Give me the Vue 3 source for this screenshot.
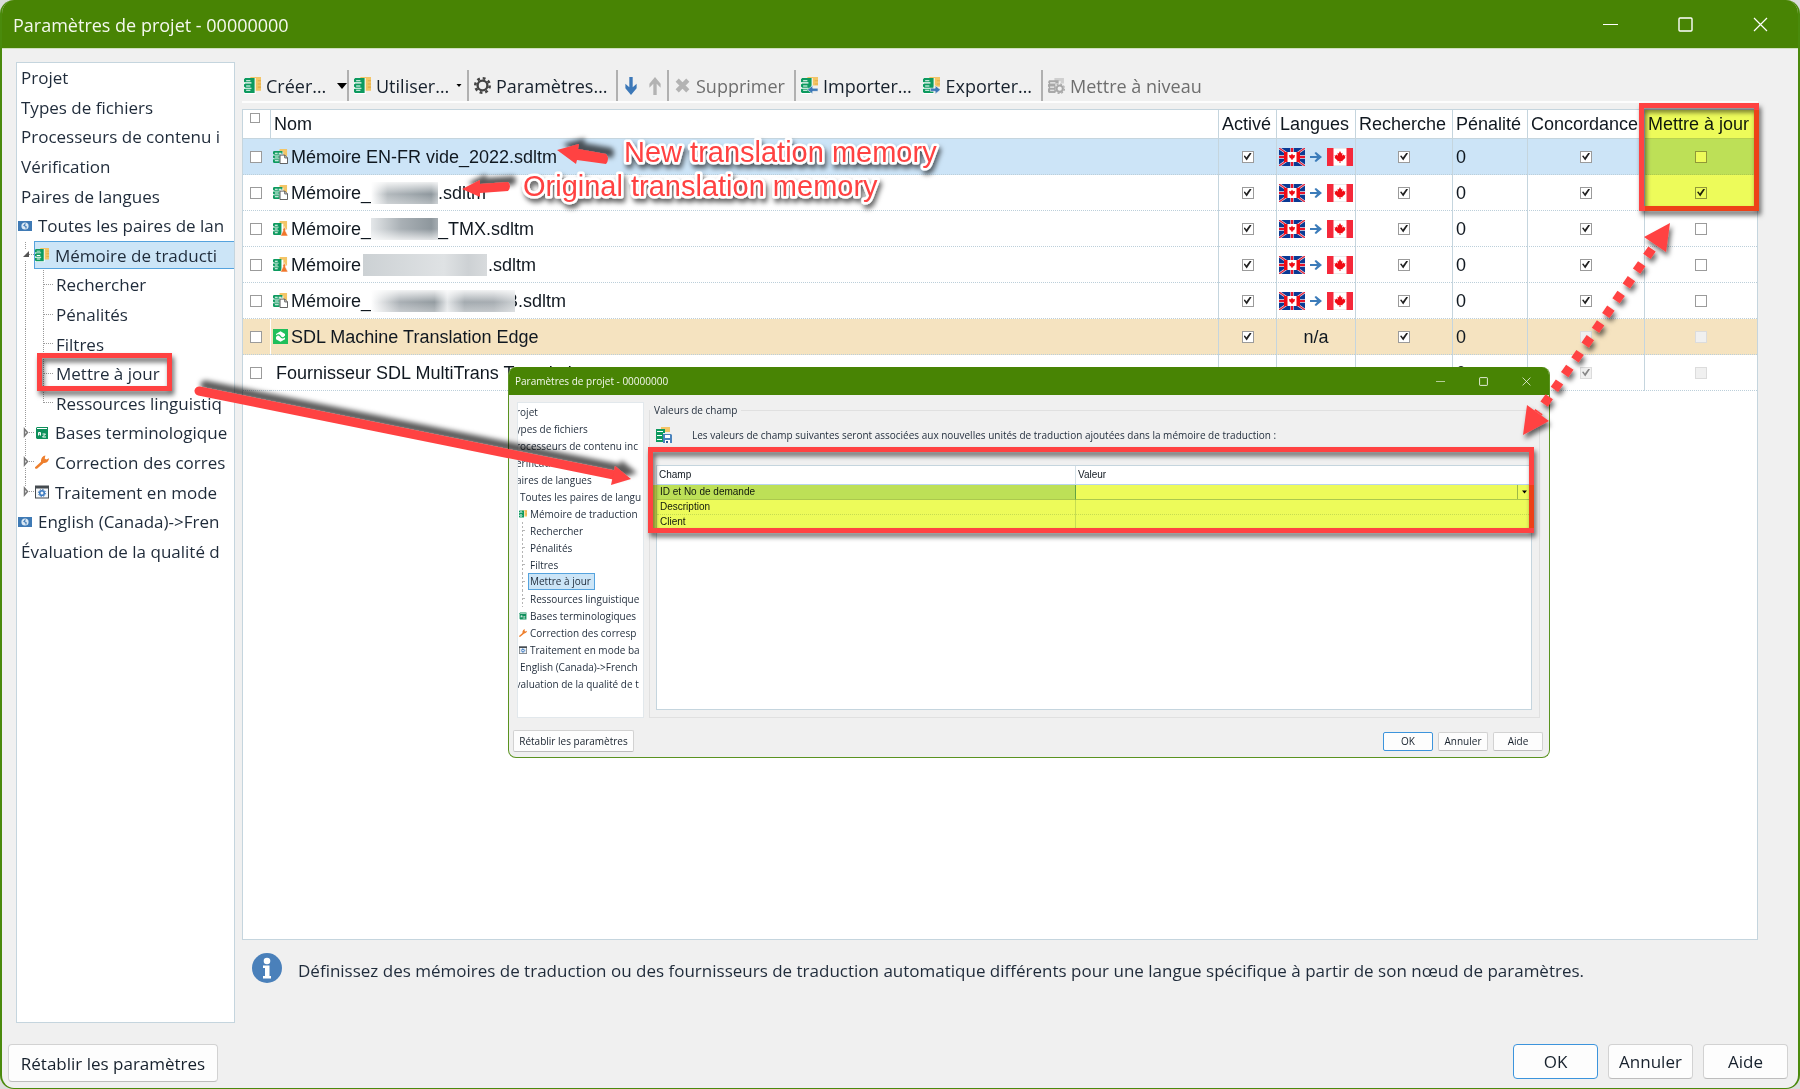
<script setup>
const tree = [
  { level: 0, label: 'Projet' },
  { level: 0, label: 'Types de fichiers' },
  { level: 0, label: 'Processeurs de contenu i' },
  { level: 0, label: 'Vérification' },
  { level: 0, label: 'Paires de langues' },
  { level: 1, label: 'Toutes les paires de lan', icon: 'i-pair' },
  { level: 2, label: 'Mémoire de traducti', icon: 'i-tm', open: true, selected: true },
  { level: 3, label: 'Rechercher' },
  { level: 3, label: 'Pénalités' },
  { level: 3, label: 'Filtres' },
  { level: 3, label: 'Mettre à jour' },
  { level: 3, label: 'Ressources linguistiq', last: true },
  { level: 2, label: 'Bases terminologique', icon: 'i-term' },
  { level: 2, label: 'Correction des corres', icon: 'i-wrench' },
  { level: 2, label: 'Traitement en mode', icon: 'i-batch', last: true },
  { level: 1, label: 'English (Canada)->Fren', icon: 'i-pair' },
  { level: 0, label: 'Évaluation de la qualité d' },
]

const dialogTree = [
  { level: 0, label: 'Projet' },
  { level: 0, label: 'Types de fichiers' },
  { level: 0, label: 'Processeurs de contenu inc' },
  { level: 0, label: 'Vérification' },
  { level: 0, label: 'Paires de langues' },
  { level: 1, label: 'Toutes les paires de langu' },
  { level: 2, label: 'Mémoire de traduction', icon: 'i-tm' },
  { level: 3, label: 'Rechercher' },
  { level: 3, label: 'Pénalités' },
  { level: 3, label: 'Filtres' },
  { level: 3, label: 'Mettre à jour', selected: true },
  { level: 3, label: 'Ressources linguistique' },
  { level: 2, label: 'Bases terminologiques', icon: 'i-term' },
  { level: 2, label: 'Correction des corresp', icon: 'i-wrench' },
  { level: 2, label: 'Traitement en mode ba', icon: 'i-batch' },
  { level: 1, label: 'English (Canada)->French' },
  { level: 0, label: 'Évaluation de la qualité de t' },
]

const rows = [
  { icon: 'i-tm-file', name: 'Mémoire EN-FR vide_2022.sdltm', kind: 'selected', flags: true, update: false },
  { icon: 'i-tm-file', name: 'Mémoire_', smear: 'a', tail: '.sdltm', flags: true, update: true },
  { icon: 'i-tm-warn', name: 'Mémoire_', smear: 'b', tail: '_TMX.sdltm', flags: true, update: false },
  { icon: 'i-tm-warn', name: 'Mémoire', smear: 'c', tail: '.sdltm', flags: true, update: false },
  { icon: 'i-tm-file', name: 'Mémoire_', smear: 'd', tail: 'B.sdltm', flags: true, update: false },
  { icon: 'i-edge', name: 'SDL Machine Translation Edge', kind: 'machine', na: true, update: false, locked: true, match: false },
  { name: 'Fournisseur SDL MultiTrans Translation', kind: 'plain', update: false, locked: true, match: true, off: true },
]

const fields = ['ID et No de demande', 'Description', 'Client']
</script>

<template>
  <div class="page">
    <svg class="sprite" width="0" height="0" aria-hidden="true">
      <symbol id="i-tm" viewBox="0 0 16 16">
        <path fill="#f3c567" d="M6 0h10v13h-6V2H6z" /><path fill="#e3ac45" d="M13 3h3v1h-3zM13 6h3v1h-3zM13 9h3v1h-3z" />
        <path fill="#fff" d="M0 1h11v15H0z" />
        <path fill="#0d9a5f" d="M1 1h9v14H1l-1-1v-3l1-1-1-1V7l1-1-1-1V2z" />
        <path fill="#fff" d="M2 3h4v1H2zM2 8h4v1H2zM2 12h4v1H2zM0 5h7v1H0zM0 10h7v1H0z" />
      </symbol>
      <symbol id="i-tm-file" viewBox="0 0 16 16">
        <path fill="#f3c567" d="M7 0h8v8h-4V3H7z" />
        <path fill="#0d9a5f" d="M1 2h9v3H7v10H1l-1-1v-3l1-1-1-1V7l1-1-1-1V3z" />
        <path fill="#fff" d="M2 4h3v1H2zM2 8h4v1H2zM2 12h4v1H2zM0 6h7v1H0zM0 10h7v1H0zM6 4h3v1H6z" />
        <path fill="#fff" stroke="#555" d="M7.500 6.500h5l3 3v6h-8z" /><path fill="none" stroke="#555" d="M12.500 6.500v3h3" />
      </symbol>
      <symbol id="i-tm-warn" viewBox="0 0 16 16">
        <path fill="#f3c567" d="M7 0h8v9h-4V3H7z" />
        <path fill="#0d9a5f" d="M1 2h8v13H1l-1-1v-3l1-1-1-1V7l1-1-1-1V3z" />
        <path fill="#fff" d="M2 4h3v1H2zM2 8h3v1H2zM2 12h3v1H2zM0 6h6v1H0zM0 10h6v1H0z" />
        <path fill="#f0762b" stroke="#fff" stroke-width=".6" d="M12 6l1.500 3-.3 1.500L16 16H8l2.700-5.500L10.500 9z" />
      </symbol>
      <symbol id="i-import" viewBox="0 0 16 16">
        <use href="#i-tm" /><path fill="#efefef" d="M10 8h6v8h-5z" />
        <path fill="#3c78b8" stroke="#efefef" stroke-width=".6" d="M11 8 6 12l5 4v-2.500h5v-3h-5z" />
      </symbol>
      <symbol id="i-export" viewBox="0 0 16 16">
        <use href="#i-tm" /><path fill="#efefef" d="M10 9h6v7h-6z" />
        <path fill="#3c78b8" stroke="#efefef" stroke-width=".6" d="M11.500 8 16.500 12l-5 4v-2.500H7v-3h4.500z" />
      </symbol>
      <symbol id="i-upgrade" viewBox="0 0 16 16">
        <path fill="#cfcfcf" d="M6 1h9v5h-3V4H6z" />
        <path fill="#a8a8a8" d="M1 3h9v3H7v9H1l-1-1v-3l1-1-1-1V7l1-1-1-1z" />
        <path fill="#efefef" d="M2 5h5v1H2zM2 9h4v1H2zM2 12h4v1H2z" />
        <circle cx="11" cy="11" r="3" fill="none" stroke="#a8a8a8" stroke-width="2" /><circle cx="11" cy="11" r="4.500" fill="none" stroke="#a8a8a8" stroke-dasharray="2 1.500" />
      </symbol>
      <symbol id="i-save" viewBox="0 0 16 16">
        <path fill="#f3c567" d="M5 0h9v5H9V3H5z" />
        <path fill="#0d9a5f" d="M0 2h9v4H7v9H0z" /><path fill="#fff" d="M1 4h6v1H1zM1 8h5v1H1zM1 12h5v1H1z" />
        <path fill="#4b83bd" d="M7 7h8l1 1v8H7z" /><path fill="#fff" d="M9 8h5v3H9zM9 13h5v3H9z" /><path fill="#2c5c92" d="M10 14h2v2h-2z" />
      </symbol>
      <symbol id="i-edge" viewBox="0 0 16 16">
        <path fill="#1fbf5c" d="M0 0h16v16H0z" /><path fill="#fff" d="M8 2.500l4.800 2.700v5.600L8 13.500l-4.800-2.700V5.200z" />
        <path fill="none" stroke="#1fbf5c" stroke-width="1.400" d="M3 8c2-3 4-1.500 5 0s3 2.500 5-.5" />
      </symbol>
      <symbol id="i-pair" viewBox="0 0 14 10">
        <path fill="#3f7ab5" d="M0 0h14v10H0z" /><circle cx="7" cy="5" r="3.600" fill="#dbe9f5" />
        <path fill="none" stroke="#3f7ab5" stroke-width="1.200" d="M7.500 2.500 6 4.500l2 1v2" />
      </symbol>
      <symbol id="i-term" viewBox="0 0 14 14">
        <path fill="#0e8f5b" d="M2 1h11v12H2l-1-1V2z" /><path fill="#fff" d="M2 2h10v1H2z" />
        <path fill="none" stroke="#fff" d="M3.500 9.500v-3h2v3M3.500 8h2M7.500 8h3l-3 3h3.500" />
      </symbol>
      <symbol id="i-wrench" viewBox="0 0 14 14">
        <path fill="#ee7f2d" d="M0 12.300 6 6.800C5.700 3.600 7.600.7 10.400.4L9.700 3.500l1.600 1L14 3.200c-.2 3.200-2.700 4.900-5.400 4.900L2.300 13.600C1 14.200-.3 13.300 0 12.300z" />
      </symbol>
      <symbol id="i-batch" viewBox="0 0 14 13">
        <path fill="#454b50" d="M0 0h14v13H0z" /><path fill="#f4f6f8" d="M1 3h12v9H1z" />
        <circle cx="7" cy="7.500" r="2.300" fill="none" stroke="#3b7ac0" stroke-width="1.600" /><circle cx="7" cy="7.500" r="3.600" fill="none" stroke="#3b7ac0" stroke-dasharray="1.400 1.400" />
      </symbol>
      <symbol id="i-gear" viewBox="0 0 16 16">
        <circle cx="8" cy="8" r="4.600" fill="none" stroke="#444" stroke-width="2.200" />
        <circle cx="8" cy="8" r="6.800" fill="none" stroke="#444" stroke-width="2.400" stroke-dasharray="2.670 2.670" />
      </symbol>
      <symbol id="i-down" viewBox="0 0 14 16"><path fill="#3c78b8" d="M5.500 0h3v9L12 6v4l-5 6-5-6V6l3.500 3z" /></symbol>
      <symbol id="i-up" viewBox="0 0 14 16"><path fill="#b3b3b3" d="M5.500 16h3V6L12 9.500V6L7 0 2 6v3.500L5.500 6z" /></symbol>
      <symbol id="i-cross" viewBox="0 0 16 16"><path fill="none" stroke="#b3b3b3" stroke-width="4.200" d="M3 3l10 10M13 3 3 13" /></symbol>
      <symbol id="i-caret" viewBox="0 0 10 6"><path fill="#000" d="M0 0h10L5 6z" /></symbol>
      <symbol id="i-min" viewBox="0 0 15 15"><path stroke="#fff" d="M0 7.500h15" /></symbol>
      <symbol id="i-max" viewBox="0 0 15 15"><rect x="1" y="1" width="13" height="13" rx="1" fill="none" stroke="#fff" stroke-width="1.400" /></symbol>
      <symbol id="i-close" viewBox="0 0 15 15"><path stroke="#fff" stroke-width="1.200" d="M1 1l13 13M14 1 1 14" /></symbol>
      <symbol id="i-info" viewBox="0 0 30 30">
        <circle cx="15" cy="15" r="15" fill="#4a80ba" /><circle cx="15" cy="8" r="3.300" fill="#fff" />
        <path fill="#fff" d="M11 12.500h6.500v10.500H19v2.500h-8V23h2v-8h-2z" />
      </symbol>
      <symbol id="i-gb" viewBox="0 0 26 18">
        <path fill="#0a3a94" d="M0 0h26v18H0z" />
        <path stroke="#f4dfe4" stroke-width="2.400" d="M0 0l26 18M26 0 0 18" /><path stroke="#e0203a" stroke-width="1.200" d="M0 0l26 18M26 0 0 18" />
        <path stroke="#f4dfe4" stroke-width="3.400" d="M13 0v18M0 9h26" /><path stroke="#e8142c" stroke-width="2.200" d="M13 0v18M0 9h26" />
        <path fill="#f00a14" d="M5 4h16v10H5z" /><path fill="#fff" d="M8.500 4h9v10h-9z" /><path fill="#f00a14" d="M13 5.500l1 1.700 2-.2-.5 2.500-2 1.500V12h-1v-1l-2-1.500L10 7l2 .2z" />
      </symbol>
      <symbol id="i-ca" viewBox="0 0 26 18">
        <path fill="#fff" stroke="#d8d8d8" d="M0 0h26v18H0z" /><path fill="#f5283a" d="M0 0h6.500v18H0zM19.500 0H26v18h-6.500z" />
        <path fill="#f00a14" d="M13 3l1.300 2.400 1.200-.6-.4 3 1.500-1.300.5 1 1.400-.2-.6 1.900.6.500-3 2.700v.9l-2-.2V15h-1v-1.900l-2 .2v-.9l-3-2.700.6-.5L7.500 7.300l1.400.2.5-1 1.500 1.300-.4-3 1.200.6z" />
      </symbol>
      <symbol id="i-to" viewBox="0 0 12 10"><path fill="#3c7cba" d="M0 4h7L4.500 1 6 0l6 5-6 5-1.500-1L7 6H0z" /></symbol>
    </svg>

    <div class="window">
      <header class="titlebar">
        <h1>Paramètres de projet - 00000000</h1>
        <button type="button" aria-label="Réduire"><svg width="15" height="15"><use href="#i-min" /></svg></button>
        <button type="button" aria-label="Agrandir"><svg width="15" height="15"><use href="#i-max" /></svg></button>
        <button type="button" aria-label="Fermer"><svg width="15" height="15"><use href="#i-close" /></svg></button>
      </header>

      <div class="content">
        <nav class="tree">
          <ul>
            <li v-for="n in tree" :key="n.label" :class="['l' + n.level, { on: n.selected }]">
              <svg v-if="n.level === 2" class="guide" width="17" height="30" viewBox="0 0 17 30">
                <path class="dots" :d="n.last ? 'M8.500 0v9' : 'M8.500 0v9M8.500 21v9'" />
                <path class="dots" d="M12 14.500h5" />
                <path v-if="n.open" fill="#555" d="M12 11v6H6z" />
                <path v-else fill="none" stroke="#777" stroke-width="1.500" d="M7.500 11v7l3-3.500z" />
              </svg>
              <svg v-if="n.level === 3" class="guide" width="39" height="30" viewBox="0 0 39 30">
                <path class="dots" d="M8.500 0v30" />
                <path class="dots" :d="n.last ? 'M26.500 0v15' : 'M26.500 0v30'" /><path class="dots" d="M27 14.500h9" />
              </svg>
              <a href="#"><svg v-if="n.icon" class="nicon"><use :href="'#' + n.icon" /></svg><span>{{ n.label }}</span></a>
            </li>
          </ul>
        </nav>

        <main>
          <div class="toolbar">
            <div class="group g1">
              <button type="button"><svg class="ic"><use href="#i-tm" /></svg>Créer…</button>
              <button type="button" aria-label="Options de création" class="drop"><svg width="10" height="6"><use href="#i-caret" /></svg></button>
            </div>
            <div class="group g2">
              <button type="button"><svg class="ic"><use href="#i-tm" /></svg>Utiliser…<svg class="small" width="6" height="3"><use href="#i-caret" /></svg></button>
            </div>
            <div class="group g3">
              <button type="button"><svg class="ic"><use href="#i-gear" /></svg>Paramètres…</button>
            </div>
            <div class="group g4">
              <button type="button" aria-label="Descendre"><svg width="16" height="18"><use href="#i-down" /></svg></button>
              <button type="button" aria-label="Monter" disabled><svg width="16" height="18"><use href="#i-up" /></svg></button>
            </div>
            <div class="group g5">
              <button type="button" disabled><svg class="ic"><use href="#i-cross" /></svg>Supprimer</button>
            </div>
            <div class="group g6">
              <button type="button"><svg class="ic"><use href="#i-import" /></svg>Importer…</button>
              <button type="button"><svg class="ic"><use href="#i-export" /></svg>Exporter…</button>
            </div>
            <div class="group g7">
              <button type="button" disabled><svg class="ic"><use href="#i-upgrade" /></svg>Mettre à niveau</button>
            </div>
          </div>

          <div class="panel">
            <table class="memories">
              <colgroup><col class="c0" /><col /><col class="c2" /><col class="c3" /><col class="c4" /><col class="c5" /><col class="c6" /><col class="c7" /></colgroup>
              <thead>
                <tr>
                  <th class="pick"><input type="checkbox" aria-label="Tout sélectionner" /></th>
                  <th>Nom</th><th>Activé</th><th>Langues</th><th>Recherche</th><th>Pénalité</th><th>Concordance</th><th>Mettre à jour</th>
                </tr>
              </thead>
              <tbody>
                <tr v-for="(r, i) in rows" :key="i" :class="r.kind">
                  <td class="pick"><input type="checkbox" :aria-label="'Sélectionner ' + r.name" /></td>
                  <td class="name">
                    <div>
                      <svg v-if="r.icon"><use :href="'#' + r.icon" /></svg><span>{{ r.name }}</span><i v-if="r.smear" :class="['smear', r.smear]"></i><span>{{ r.tail }}</span>
                    </div>
                  </td>
                  <td class="mid"><input type="checkbox" :checked="!r.off" aria-label="Activé" /></td>
                  <td class="mid">
                    <div v-if="r.flags" class="flags">
                      <svg width="26" height="18"><use href="#i-gb" /></svg><svg width="12" height="10"><use href="#i-to" /></svg><svg width="26" height="18"><use href="#i-ca" /></svg>
                    </div>
                    <template v-else-if="r.na">n/a</template>
                  </td>
                  <td class="mid"><input type="checkbox" :checked="!r.off" :disabled="r.off" aria-label="Recherche" /></td>
                  <td class="num">0</td>
                  <td class="mid"><input type="checkbox" :checked="r.match !== false" :disabled="r.locked" aria-label="Concordance" /></td>
                  <td class="mid"><input type="checkbox" :checked="r.update" :disabled="r.locked" aria-label="Mettre à jour" /></td>
                </tr>
              </tbody>
            </table>
          </div>

          <p class="info">
            <svg width="30" height="30"><use href="#i-info" /></svg>
            <span>Définissez des mémoires de traduction ou des fournisseurs de traduction automatique différents pour une langue spécifique à partir de son nœud de paramètres.</span>
          </p>
        </main>
      </div>

      <footer class="actions">
        <button type="button" class="reset">Rétablir les paramètres</button>
        <button type="button" class="ok">OK</button>
        <button type="button">Annuler</button>
        <button type="button">Aide</button>
      </footer>
    </div>

    <section class="dialog" aria-label="Paramètres de projet">
      <header class="titlebar">
        <h2>Paramètres de projet - 00000000</h2>
        <button type="button" aria-label="Réduire"><svg width="9" height="9"><use href="#i-min" /></svg></button>
        <button type="button" aria-label="Agrandir"><svg width="9" height="9"><use href="#i-max" /></svg></button>
        <button type="button" aria-label="Fermer"><svg width="9" height="9"><use href="#i-close" /></svg></button>
      </header>
      <div class="dcontent">
        <nav class="dtree">
          <ul>
            <li v-for="n in dialogTree" :key="n.label" :class="['l' + n.level, { on: n.selected }]">
              <svg v-if="n.icon" width="8" height="8"><use :href="'#' + n.icon" /></svg>
              <svg v-if="n.level === 3" width="8" height="17"><path class="faint" d="M3.500 0v17M4 8.500h4" /></svg>
              <a href="#">{{ n.label }}</a>
            </li>
          </ul>
        </nav>
        <fieldset>
          <legend>Valeurs de champ</legend>
          <p>
            <svg width="16" height="16"><use href="#i-save" /></svg>
            <span>Les valeurs de champ suivantes seront associées aux nouvelles unités de traduction ajoutées dans la mémoire de traduction :</span>
          </p>
          <div class="grid">
            <table>
              <colgroup><col class="f0" /><col /></colgroup>
              <thead><tr><th>Champ</th><th>Valeur</th></tr></thead>
              <tbody>
                <tr v-for="(f, i) in fields" :key="f" :class="{ current: i === 0 }">
                  <td>{{ f }}</td>
                  <td>
                    <div v-if="i === 0" class="pickvalue">
                      <select :aria-label="f"><option></option></select>
                      <svg width="6" height="4"><use href="#i-caret" /></svg>
                    </div>
                  </td>
                </tr>
              </tbody>
            </table>
          </div>
        </fieldset>
      </div>
      <footer>
        <button type="button" class="reset">Rétablir les paramètres</button>
        <button type="button" class="ok">OK</button>
        <button type="button">Annuler</button>
        <button type="button">Aide</button>
      </footer>
    </section>

    <svg class="notes" width="1800" height="1089" viewBox="0 0 1800 1089">
      <defs>
        <filter id="shade-down" x="-20%" y="-20%" width="140%" height="150%"><feDropShadow dx="2" dy="4" stdDeviation="2.500" flood-opacity=".6" /></filter>
        <filter id="shade-up" x="-20%" y="-60%" width="140%" height="200%"><feDropShadow dx="6" dy="-6" stdDeviation="2.500" flood-opacity=".65" /></filter>
      </defs>
      <g fill="none" stroke="#ff4242" stroke-width="5" filter="url(#shade-down)">
        <path d="M39.500 355.500h130v33h-130z" />
        <path d="M1641.500 105.500h115v103h-115z" />
        <path d="M650.500 449.500h881v81h-881z" />
      </g>
      <g filter="url(#shade-up)">
        <path fill="none" stroke="#ff4242" stroke-width="9" stroke-linecap="round" d="M199 391 614 475" />
        <path fill="#ff4242" d="M615 466l16 13-20 6z" />
      </g>
      <g fill="#ff4242" filter="url(#shade-up)">
        <path d="M557 150l22-6-1 5 28 5q4 5 0 10l-29-4-1 4z" />
        <path d="M462 189l18-9v4l28-2q4 4 0 9l-28 2v4z" />
      </g>
      <g class="callouts" filter="url(#shade-down)">
        <text x="624" y="162">New translation memory</text>
        <text x="523" y="196">Original translation memory</text>
      </g>
      <g fill="#ff4242" filter="url(#shade-down)">
        <path fill="none" stroke="#ff4242" stroke-width="9" stroke-dasharray="9 9" d="M1652 249 1538 413" />
        <path d="M1670 223l-4 29-22-15zM1523 435l4-30 22 16z" />
      </g>
    </svg>
    <div class="marker head"></div>
    <div class="marker list"></div>
  </div>
</template>

<style>
html, body { margin: 0; background: #dcdcdc; }
</style>

<style scoped>
* { box-sizing: border-box; }
.page { position: relative; min-height: 100vh; font-family: "Open Sans", "Noto Sans", sans-serif; font-size: 17px; color: #1f2b3a; overflow: hidden; }
.sprite { position: absolute; }
button { font: inherit; color: inherit; margin: 0; padding: 0; border: 0; background: none; }
svg { flex: none; display: block; }
ul { list-style: none; margin: 0; padding: 0; }
a { color: inherit; text-decoration: none; }
.window { min-height: 100vh; display: flex; flex-direction: column; background: #f0f0f0; border: solid #4a8a0c; border-width: 0 2px 1px; border-radius: 14px; overflow: hidden; }
.titlebar { display: flex; align-items: center; height: 49px; background: #488404; color: #f4f8ee; border-bottom: 1px solid #cfe0bd; padding-left: 11px; }
.titlebar h1 { flex: 1; margin: 0; padding-top: 2px; font-size: 18px; font-weight: 400; line-height: 24px; }
.titlebar button { width: 75px; height: 48px; display: flex; align-items: center; justify-content: center; }
.content { flex: 1; display: flex; gap: 7px; padding: 13px 40px 0 14px; }

.tree { width: 219px; background: #fff; border: 1px solid #c5d5de; overflow: hidden; white-space: nowrap; }
.tree ul { height: 503px; display: grid; grid-auto-rows: 1fr; }
.tree li { display: flex; align-items: center; overflow: hidden; }
.tree a { flex: 1; height: 28px; display: flex; align-items: center; }
.tree .l0 { padding-left: 4px; }
.tree .l1 { padding-left: 1px; }
.tree .l1 a { gap: 6px; }
.tree .l2 a { gap: 6px; border: 1px solid transparent; }
.tree .l2 .nicon { width: 14px; height: 14px; }
.tree .l1 .nicon { width: 14px; height: 10px; }
.tree .on a { background: #cce5f7; border-color: #55a3de; border-right: 0; }
.dots { fill: none; stroke: #9a9a9a; stroke-dasharray: 1 1; }

main { flex: 1; min-width: 0; display: flex; flex-direction: column; }
.toolbar { height: 41px; margin-bottom: 6px; padding: 8px 0 0; border-bottom: 2px solid #fdfdfd; display: flex; font-size: 18px; color: #16202c; }
.group { height: 31px; border-right: 2px solid #b0b0b0; display: flex; align-items: center; justify-content: space-between; padding-left: 2px; white-space: nowrap; }
.group + .group { padding-left: 5px; }
.group button { display: flex; align-items: center; gap: 5px; }
.group button:disabled { color: #6e6e6e; }
.ic { width: 17px; height: 17px; }
.small { margin-left: 2px; }
.g1 { width: 107px; }
.g2 { width: 120px; }
.g3 { width: 149px; }
.g4 { width: 51px; padding-right: 4px; }
.g5 { width: 127px; }
.g6 { width: 247px; padding-right: 9px; }
.g7 { border: 0; }

.panel { flex: 1; background: #fff; border: 1px solid #c5d5de; }
table { width: 100%; table-layout: fixed; border-collapse: separate; border-spacing: 0; font-family: "Liberation Sans", Arial, sans-serif; color: #101820; }
.memories { font-size: 18px; line-height: 20px; }
.c0 { width: 27px; } .c2 { width: 58px; } .c3 { width: 79px; } .c4 { width: 97px; } .c5 { width: 75px; } .c6 { width: 117px; } .c7 { width: 113px; }
th { font-weight: 400; text-align: left; white-space: nowrap; }
.memories th { height: 29px; padding: 0 0 0 3px; border-bottom: 1px solid #c5d5de; border-left: 1px solid #c5d5de; }
.memories td { height: 36px; padding: 0; border-bottom: 1px dotted #bccfda; border-left: 1px solid #c5d5de; }
.memories .pick { border-left: 0; padding: 0 0 0 7px; }
.memories th.pick { vertical-align: top; padding-top: 3px; }
.memories td.name { border-left-color: transparent; padding-left: 2px; }
.memories td.num { padding-left: 3px; }
.name div { display: flex; align-items: center; white-space: nowrap; }
.name svg { width: 15px; height: 15px; margin-right: 3px; }
.plain .name div { padding-left: 3px; }
.mid { text-align: center; }
.selected td { background: #cce4f7; }
.machine td { background: #f5e3c0; }
.memories .machine td.name { border-left-color: #fff; }
input { appearance: none; display: block; width: 12px; height: 12px; margin: 0; border: 1px solid #9b9b9b; background: #fff; }
th input { width: 10px; height: 10px; }
.mid input { margin: 0 auto; }
input:checked::before { content: ""; display: block; width: 8px; height: 8px; margin: 1px; background: #222; clip-path: polygon(0 45%, 18% 38%, 36% 62%, 82% 0, 100% 8%, 40% 100%); }
input:disabled { border-color: #dcdcdc; background: #f0f0f0; }
input:disabled::before { background: #888; }
.flags { display: flex; align-items: center; justify-content: space-between; padding: 0 2px; }
.smear { position: relative; height: 22px; }
.smear.a { width: 67px; background: linear-gradient(180deg, rgba(255,255,255,.85), rgba(255,255,255,0) 55%, rgba(255,255,255,.35)), linear-gradient(90deg, #fff, #b3b9bd 25%, #a0a8ad 60%, #8e979d 90%, #b6bcc0); }
.smear.b { width: 67px; background: linear-gradient(180deg, rgba(255,255,255,0) 50%, rgba(255,255,255,.75)), linear-gradient(90deg, #e4e7e9, #a9b0b5 45%, #8e979d 90%, #a6adb2); }
.smear.c { width: 124px; margin: 0 1px 0 2px; background: linear-gradient(90deg, #ccd1d4, #dfe2e4 65%, #cdd1d4 85%, #d8dbdd); }
.smear.d { width: 144px; margin-right: -9px; background: linear-gradient(180deg, rgba(255,255,255,.85), rgba(255,255,255,0) 55%, rgba(255,255,255,.35)), linear-gradient(90deg, #fff, #aab0b5 20%, #949ca1 44%, #e2e5e7 53%, #a4abb0 65%, #a7adb2 85%, #ccd0d3); }

.info { height: 83px; margin: 0; padding: 13px 0 0 10px; display: flex; gap: 16px; white-space: nowrap; }
.info span { line-height: 36px; }
.actions { display: flex; align-items: flex-start; gap: 10px; height: 65px; padding: 21px 10px 0 6px; }
.actions button, .dialog footer button { background: #fdfdfd; border: 1px solid #d2d2d2; border-bottom-color: #bdbdbd; border-radius: 4px; color: #16202c; white-space: nowrap; }
.actions button { width: 85px; height: 35px; }
.actions .reset { width: 210px; height: 38px; margin-right: auto; }
.actions .ok, .dialog footer .ok { border-color: #3c94dc; }

.dialog { position: absolute; left: 508px; top: 367px; width: 1042px; height: 391px; display: flex; flex-direction: column; background: #f0f0f0; border: 1px solid #5a9320; border-top: 0; border-radius: 8px; overflow: hidden; font-size: 10px; }
.dialog .titlebar { height: 28px; padding: 0 1px 0 6px; border-bottom: 0; }
.dialog h2 { flex: 1; margin: 0; font-size: 10px; font-weight: 400; }
.dialog .titlebar button { width: 43px; height: 28px; }
.dcontent { flex: 1; display: flex; gap: 5px; padding: 7px 9px 0 8px; }
.dtree { width: 127px; background: #fff; border: 1px solid #e2e8ec; overflow: hidden; white-space: nowrap; }
.dtree li { height: 17px; display: flex; align-items: center; gap: 3px; }
.dtree .l0 { margin-left: -8px; }
.dtree .l1 { padding-left: 2px; }
.dtree .l2, .dtree .l3 { padding-left: 1px; }
.dtree .l3 a { padding: 0 2px; margin-left: -2px; }
.dtree .on a { background: #cce5f7; border: 1px solid #55a3de; padding: 0 3px 0 1px; line-height: 15px; }
.faint { fill: none; stroke: #b5b5b5; stroke-dasharray: 2 2; }
fieldset { flex: 1; min-width: 0; height: 316px; margin: 0; padding: 0 7px 7px 6px; border: 1px solid #e0e0e0; display: flex; flex-direction: column; }
legend { padding: 0 4px; margin-left: -6px; line-height: 17px; }
fieldset p { display: flex; align-items: center; gap: 20px; height: 24px; margin: 4px 0 18px; white-space: nowrap; }
.grid { height: 247px; background: #fff; border: 1px solid #c5d5de; }
.grid table { font-size: 10px; line-height: 12px; }
.f0 { width: 418px; }
.grid th { height: 19px; padding: 0 0 0 2px; border-bottom: 1px solid #b8d4ee; }
.grid th + th, .grid td + td { border-left: 1px solid #d5e0e6; }
.grid td { height: 15px; padding: 0 0 0 3px; border-bottom: 1px dotted #d5e0e6; }
.grid td + td { padding: 0; }
.grid .current td { background: #cce4f7; border-bottom: 1px solid #b8ccd8; }
.grid .current td + td { background: #fff; border-left-color: #6aa5bb; }
.pickvalue { display: flex; align-items: center; height: 14px; }
.pickvalue select { appearance: none; flex: 1; height: 14px; border: 0; border-right: 1px solid #a9bcc6; background: transparent; font-size: 10px; padding: 0; }
.pickvalue svg { margin: 0 4px; width: 5px; }
.dialog footer { display: flex; align-items: center; gap: 5px; height: 39px; padding: 7px 6px 0 4px; }
.dialog footer button { width: 50px; height: 19px; border-radius: 2px; }
.dialog footer .reset { width: 121px; height: 22px; margin-right: auto; }

.notes { position: absolute; left: 0; top: 0; pointer-events: none; }
.callouts { font-family: "Liberation Sans", Arial, sans-serif; font-size: 29px; fill: #ff4242; stroke: #fff; stroke-width: 5px; stroke-linejoin: round; paint-order: stroke; }
.marker { position: absolute; background: #edfb5a; mix-blend-mode: multiply; pointer-events: none; }
.marker.head { left: 1645px; top: 110px; width: 114px; height: 101px; }
.marker.list { left: 653px; top: 485px; width: 881px; height: 43px; }
</style>
